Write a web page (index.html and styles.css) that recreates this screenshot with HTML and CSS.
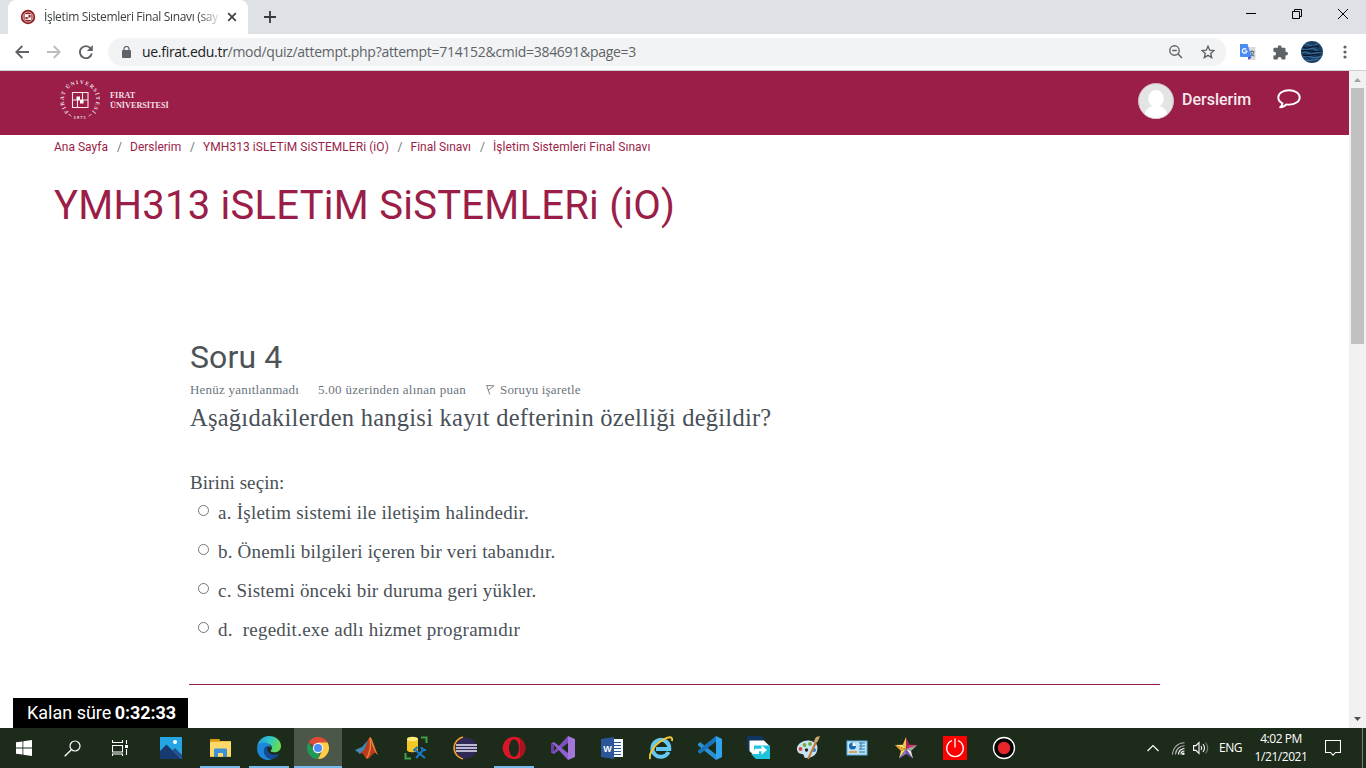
FILE: index.html
```html
<!DOCTYPE html>
<html lang="tr">
<head>
<meta charset="utf-8">
<title>İşletim Sistemleri Final Sınavı</title>
<link rel="stylesheet" href="styles.css">
</head>
<body>
<div class="screen">
  <div class="tabstrip">
    <div class="tab">
      <svg class="favicon" width="16" height="16" viewBox="0 0 16 16"><circle cx="8" cy="8" r="7.2" fill="#8f1d20"/><circle cx="8" cy="8" r="5" fill="none" stroke="#e7c9c9" stroke-width=".9"/><path d="M5 6h3v2H5zM8.500 8.500h2.500v2H8.500z" fill="#fff"/><path d="M5 5.500h6v5H5zM8 5.500v5" fill="none" stroke="#fff" stroke-width=".8"/></svg>
      <span class="tab-title">İşletim Sistemleri Final Sınavı (say</span>
      <svg class="tab-close" width="10" height="10" viewBox="0 0 10 10"><path d="M1.200 1.200l7.600 7.600M8.800 1.200L1.200 8.800" stroke="#3c4043" stroke-width="1.700"/></svg>
    </div>
    <svg class="newtab" width="12" height="12" viewBox="0 0 12 12"><path d="M6 0v12M0 6h12" stroke="#35383c" stroke-width="1.800"/></svg>
    <div class="winbtns">
      <svg width="10" height="10" viewBox="0 0 10 10"><path d="M0 4.500h10" stroke="#000"/></svg>
      <svg width="10" height="10" viewBox="0 0 10 10"><path d="M.5 2.500h7v7h-7zM2.500 2.500v-2h7v7h-2" fill="none" stroke="#000"/></svg>
      <svg width="10" height="10" viewBox="0 0 10 10"><path d="M0 0l10 10M10 0L0 10" stroke="#000"/></svg>
    </div>
  </div>

  <div class="toolbar">
    <div class="nav">
      <svg width="14" height="14" viewBox="0 0 14 14"><path d="M14 7H1.500M7.300 1L1.300 7l6 6" fill="none" stroke="#5f6368" stroke-width="1.800"/></svg>
      <svg width="14" height="14" viewBox="0 0 14 14"><path d="M0 7h12.500M6.700 1l6 6-6 6" fill="none" stroke="#babcbe" stroke-width="1.800"/></svg>
      <svg width="14" height="14" viewBox="0 0 14 14"><path d="M11.600 3.300A6 6 0 1 0 12.800 8.500" fill="none" stroke="#5f6368" stroke-width="1.900"/><path d="M13.800 0v6H7.800z" fill="#5f6368"/></svg>
    </div>
    <div class="omnibox">
      <svg class="lock" width="9" height="12" viewBox="0 0 9 12"><rect y="4" width="9" height="8" rx="1" fill="#5f6368"/><path d="M2 4.500V3a2.500 2.500 0 0 1 5 0v1.500" fill="none" stroke="#5f6368" stroke-width="1.200"/></svg>
      <span class="url"><b>ue.firat.edu.tr</b>/mod/quiz/attempt.php?attempt=714152&amp;cmid=384691&amp;page=3</span>
      <svg class="lens" width="14" height="14" viewBox="0 0 14 14"><circle cx="5.500" cy="5.500" r="4.700" fill="none" stroke="#5f6368" stroke-width="1.400"/><path d="M3.200 5.500h4.600M8.800 8.800l4.200 4.200" stroke="#5f6368" stroke-width="1.500"/></svg>
      <svg class="star" width="14" height="14" viewBox="0 0 14 14"><path d="M7 1.300l1.700 3.900 4.200.4-3.200 2.800 1 4.200L7 10.400l-3.700 2.200 1-4.200L1.100 5.600l4.200-.4z" fill="none" stroke="#5f6368" stroke-width="1.400"/></svg>
    </div>
    <svg class="translate" width="16" height="16" viewBox="0 0 16 16"><path d="M7 3h8.500v13H9z" fill="#dcdcdc"/><path d="M9.500 7.500h5M12 6v1.500M10.500 7.500c.5 2.500 2 4 4 4.800M14 7.500c-.5 2.500-2 4-4 4.800" fill="none" stroke="#617d8b" stroke-width="1.100"/><path d="M0 0h7.500L11.500 13H1a1 1 0 0 1-1-1z" fill="#4a8af4"/><path d="M8 13h3.500L8.600 16z" fill="#3f3fc0"/><path d="M6.200 5.200A2.300 2.300 0 1 0 6.900 7H4.800" fill="none" stroke="#fff" stroke-width="1.200"/></svg>
    <svg class="puzzle" width="15" height="15" viewBox="0 0 15 15"><path d="M1.300 2.800h3.500v-.6a1.900 1.900 0 0 1 3.800 0v.6h3q.9 0 .9.900v3h.6a1.900 1.900 0 0 1 0 3.800h-.6v3.100q0 .9-.9.900H8.500v-.7a1.900 1.900 0 0 0-3.800 0v.7H1.300q-.9 0-.9-.9v-3h.7a1.900 1.900 0 0 0 0-3.900H.4V3.700q0-.9.900-.9z" fill="#5f6368"/></svg>
    <svg class="profile" width="22" height="22" viewBox="0 0 22 22"><defs><clipPath id="pc"><circle cx="11" cy="11" r="11"/></clipPath></defs><g clip-path="url(#pc)"><path fill="#1a3f63" d="M0 0h22v22H0z"/><path d="M0 4q4-2 8 0t8-1 6 1M-1 8q5 2 9 0t7 1 8-1M0 12q4-2 7 0t8 0 7 0M2 16q4-2 8 0t11-1M4 19q4 1 8 0t7 0" fill="none" stroke="#3a7199" stroke-width="1.100"/><path d="M2 6q4 2 8 0t8 0M0 10q5-1 9 0t12 0M2 14q4 1 8 0t9 0" fill="none" stroke="#071428" stroke-width="1.200"/></g></svg>
    <svg class="kebab" width="4" height="14" viewBox="0 0 4 14"><g fill="#5f6368"><circle cx="2" cy="2" r="1.600"/><circle cx="2" cy="7" r="1.600"/><circle cx="2" cy="12" r="1.600"/></g></svg>
  </div>

  <div class="viewport">
    <main class="page">
      <header class="site-header">
        <div class="brand">
          <svg width="40" height="40" viewBox="0 0 40 40"><defs><path id="arcTop" d="M9.580 32.420A16.200 16.200 0 1 1 30.420 32.420"/></defs><text class="seal"><textPath href="#arcTop" startOffset="1" textLength="76">FIRAT ÜNİVERSİTESİ</textPath></text><text class="seal year" x="20" y="38.600" text-anchor="middle">1975</text><path d="M8.500 34.500q2 .3 3 1.800M31.500 34.500q-2 .3-3 1.800" stroke="#fff" stroke-width=".7" fill="none"/><path d="M12.500 12.500h15.500v15H12.500zM22.500 12.500v7.500M17.500 20v7.500M12.500 20h15.500" fill="none" stroke="#f8e8ee" stroke-width="1.100"/><path d="M16.500 16.500H20V20h-3.500zM20 20h3.500v3.500H20z" fill="#fff"/></svg>
          <div class="brand-name"><span class="n1">FIRAT</span><span class="n2">ÜNİVERSİTESİ</span></div>
        </div>
        <div class="user">
          <svg width="36" height="36" viewBox="0 0 36 36"><defs><clipPath id="av"><circle cx="18" cy="18" r="17.800"/></clipPath></defs><g clip-path="url(#av)"><path fill="#e4e4e4" d="M0 0h36v36H0z"/><ellipse cx="18" cy="15.500" rx="7.800" ry="8.500" fill="#fff"/><path d="M6 36c0-9 5-13.500 12-13.500S30 27 30 36z" fill="#fff"/></g><circle cx="18" cy="18" r="17.500" fill="none" stroke="#cbb5bd" stroke-width=".7"/></svg>
          <span class="user-link">Derslerim</span>
          <svg class="chat" width="24" height="20" viewBox="0 0 24 20"><path d="M12 1.200C6 1.200 1.300 4.400 1.300 8.400c0 2.500 1.600 4.600 4.200 5.900-.2 1.700-1 3-2.400 4 2.700-.1 4.800-1 6.300-2.900.9.200 1.700.2 2.600.2 6 0 10.700-3.200 10.700-7.200S18 1.200 12 1.200z" fill="none" stroke="#fff" stroke-width="1.900" stroke-linejoin="round"/></svg>
        </div>
      </header>
      <nav class="crumbs"><a class="c1">Ana Sayfa</a><i>/</i><a class="c2">Derslerim</a><i>/</i><a class="c3">YMH313 iSLETiM SiSTEMLERi (iO)</a><i>/</i><a class="c4">Final Sınavı</a><i>/</i><a class="c5">İşletim Sistemleri Final Sınavı</a></nav>
      <h1>YMH313 iSLETiM SiSTEMLERi (iO)</h1>
      <section class="question">
        <h2>Soru 4</h2>
        <div class="meta"><span class="m1">Henüz yanıtlanmadı</span><span class="m2">5.00 üzerinden alınan puan</span><svg width="9" height="11" viewBox="0 0 9 11"><path d="M.5 1l3.300 9.500M1 1.500l7 .3-2.500 2-3.500 2.500" fill="none" stroke="#777" stroke-width=".9"/></svg><span class="m3">Soruyu işaretle</span></div>
        <p class="qtext">Aşağıdakilerden hangisi kayıt defterinin özelliği değildir?</p>
        <p class="prompt">Birini seçin:</p>
        <div class="answers">
          <label><span class="radio"></span><span class="a1">a. İşletim sistemi ile iletişim halindedir.</span></label>
          <label><span class="radio"></span><span class="a2">b. Önemli bilgileri içeren bir veri tabanıdır.</span></label>
          <label><span class="radio"></span><span class="a3">c. Sistemi önceki bir duruma geri yükler.</span></label>
          <label><span class="radio"></span><span class="a4">d.&nbsp; regedit.exe adlı hizmet programıdır</span></label>
        </div>
      </section>
      <div class="timer">Kalan süre <b>0:32:33</b></div>
    </main>
    <div class="scrollbar">
      <svg width="17" height="17" viewBox="0 0 17 17"><path d="M5 11h7L8.500 7z" fill="#a3a3a3"/></svg>
      <div class="thumb"></div>
      <svg class="down" width="17" height="17" viewBox="0 0 17 17"><path d="M5 6h7l-3.500 4z" fill="#505050"/></svg>
    </div>
  </div>

  <div class="taskbar">
    <div class="sys">
      <div><svg width="16" height="16" viewBox="0 0 16 16"><path d="M0 2.300L6.500 1.400v6.200H0zM7.300 1.300L16 0v7.600H7.300zM0 8.400h6.500v6.200L0 13.700zM7.300 8.400H16V16l-8.700-1.300z" fill="#fff"/></svg></div>
      <div><svg width="17" height="17" viewBox="0 0 17 17"><circle cx="11" cy="6" r="5" fill="none" stroke="#fff" stroke-width="1.200"/><path d="M7.300 9.700L.7 16.300" stroke="#fff" stroke-width="1.300"/></svg></div>
      <div><svg width="16" height="16" viewBox="0 0 16 16"><path d="M.5 0v2.500h10V0M.5 5.500h10v6.500H.5zM.5 16v-2h10v2M14.500 0v4M14.500 9v6" fill="none" stroke="#fff" stroke-width="1.100"/><path d="M13 5h3v3h-3z" fill="#fff"/></svg></div>
    </div>
    <div class="apps">
      <div class="app"><svg width="24" height="24" viewBox="0 0 24 24"><path fill="#25a5e3" d="M1 1h22v22H1z"/><path d="M1 15l6.500-6.500L22 23H1z" fill="#173b70"/><path d="M13.500 14.500L16 12l7 7v4h-1z" fill="#25528c"/><circle cx="16" cy="6" r="2.100" fill="#fff"/></svg></div>
      <div class="app running"><svg width="24" height="24" viewBox="0 0 24 24"><path d="M2 3h9l1 2h11v16H2z" fill="#f2bd42"/><path d="M2 3h9l1.500 2.500H2z" fill="#d99a16"/><path d="M2 6h21v14H2z" fill="#fed869"/><path d="M6 21v-7.500q0-1 1-1h11q1 0 1 1V21h-4v-4h-5v4z" fill="#3c91d4"/></svg></div>
      <div class="app running"><svg width="24" height="24" viewBox="0 0 24 24"><defs><linearGradient id="eg" x1="0" x2="1" y1="0" y2=".3"><stop stop-color="#2697df"/><stop offset=".55" stop-color="#2dc7c8"/><stop offset="1" stop-color="#68dc52"/></linearGradient></defs><path d="M.2 11C1 4 6 0 12 0c7 0 12 4.500 12 10 0 4-3 6.300-6.500 6.300-3 0-4.500-1-3.300-2.300 2-2.500 0-6-4-6-5 0-9.500 1-10 3z" fill="url(#eg)"/><path d="M.2 11C1.500 7 5 6 8 6.500c4 .4 6 3 5.500 5.500C12 9 7 11 7 15c0 5 5 8 8 8.500C7 26-1 20 .2 11z" fill="#1f87d8"/><path d="M11.500 9.700C7 10 6 14 7.500 18s6 6 8.500 5c3-1 5-3 6.500-5.300-6 2.300-11.500.3-12-3.700-.2-2 0-3.500 1-4.300z" fill="#124b99"/></svg></div>
      <div class="app running active"><svg width="24" height="24" viewBox="0 0 24 24"><path d="M2.470 6.500A11 11 0 0 1 21.530 6.500L12 12z" fill="#df4a38"/><path d="M2.470 6.500A11 11 0 0 0 12 23L14.500 13 8 14z" fill="#219957"/><path d="M21.530 6.500A11 11 0 0 1 12 23l4.500-9L12 6.500z" fill="#fdce46"/><circle cx="12" cy="12" r="5.200" fill="#f4f4f4"/><circle cx="12" cy="12" r="4" fill="#4b8df5"/></svg></div>
      <div class="app"><svg width="24" height="24" viewBox="0 0 24 24"><path d="M0 14l7-3 7-8-5 12-4 3z" fill="#4289b9"/><path d="M5 17l4-3C12 9 13 2 15 1c2-.5 5 13 8 18-3-3-4-2-6 0s-3 4-5 4-3-7-7-6z" fill="#bb3b1d"/><path d="M15 1c2 0 5 13 8 18-4-3-6-10-8-18z" fill="#e97d2b"/><path d="M15 2c1 7 0 15-3 20" stroke="#f18b3b" stroke-width="1.300" fill="none"/></svg></div>
      <div class="app"><svg width="24" height="24" viewBox="0 0 24 24"><path d="M17 1.500h5.500V7M1.500 17v5.500H7" fill="none" stroke="#42a048" stroke-width="2"/><path d="M3 3v11c0 3 11 3 11 0V3z" fill="#f3c724"/><ellipse cx="8.500" cy="3" rx="5.500" ry="2.300" fill="#ffea7c"/><path d="M10 13l11 9M20 13l-8 9" stroke="#1b78c2" stroke-width="2.200"/><path d="M9.500 15l4-4M17.500 11q0 3.500 4.500 3" fill="none" stroke="#1b78c2" stroke-width="2.200"/></svg></div>
      <div class="app"><svg width="24" height="24" viewBox="0 0 24 24"><path d="M10 1.200A11 11 0 0 0 10 22.800" fill="none" stroke="#f29b37" stroke-width="1.700"/><circle cx="13.300" cy="12" r="10.500" fill="#302958"/><path d="M3 9h21M2.800 12H24M3 15h21" stroke="#eceaf7" stroke-width="1.500"/></svg></div>
      <div class="app running"><svg width="24" height="24" viewBox="0 0 24 24"><circle cx="12" cy="12" r="11.300" fill="#d91728"/><path d="M18 2.500a11 11 0 0 1 0 19z" fill="#aa1422"/><ellipse cx="12" cy="12" rx="5" ry="8.800" fill="#1d2b1b"/></svg></div>
      <div class="app"><svg width="24" height="24" viewBox="0 0 24 24"><path d="M17 0l7 3v18l-7 3z" fill="#a276dc"/><path d="M17 0v7L3 18l-3-1.500v-1.300L3 15z" fill="#7f50bb"/><path d="M0 7.500L3 6l14 11v7L3 9z" fill="#8f60ce"/><path d="M0 7.500L3 9v6l-3 1.500z" fill="#6c3da8"/></svg></div>
      <div class="app"><svg width="24" height="24" viewBox="0 0 24 24"><path d="M12 3h11v18H12z" fill="#f6f9ff"/><path d="M13 6.500h8M13 9.500h8M13 12.500h8M13 15.500h8M13 18.500h8" stroke="#2b579a" stroke-width="1.200"/><path d="M1 3l13-2v22L1 21z" fill="#2b579a"/><text class="word" x="7.500" y="15.500" text-anchor="middle">W</text></svg></div>
      <div class="app"><svg width="24" height="24" viewBox="0 0 24 24"><path d="M19.500 16A8.500 8.500 0 1 1 20.300 13H7" fill="none" stroke="#62c9f2" stroke-width="4"/><path d="M1.500 23C-1 20 4 10 12 5s12-5 11 0" fill="none" stroke="#f4c533" stroke-width="1.900"/></svg></div>
      <div class="app"><svg width="24" height="24" viewBox="0 0 24 24"><path d="M0 8l2-2 16 12.500V24L0 9.500z" fill="#2a91d4"/><path d="M0 16l2 2L18 5.500V0L0 14.500z" fill="#1875b9"/><path d="M18 0l6 3v18l-6 3z" fill="#30a5ed"/></svg></div>
      <div class="app"><svg width="24" height="24" viewBox="0 0 24 24"><path d="M0 0h14l3 3v13H3L0 13z" fill="#10345f"/><path d="M2.500 4.500H17l6 6V18H5.500l-3-3z" fill="#fff"/><path d="M7 9.500h16V23H9l-5-5h8v-3.500H7z" fill="#1fc3dc"/><path d="M7.500 12.800h7V9.300l5.500 4.700-5.500 4.700v-3.500h-7z" fill="#fff"/></svg></div>
      <div class="app"><svg width="24" height="24" viewBox="0 0 24 24"><path d="M1 14C0 8 8 3 15 5s7 6 6 10-5 7-11 7c-3 0-1-4-4-4-2 0-4-1-5-4z" fill="#c8e3f2"/><g><circle cx="4.500" cy="13" r="1.900" fill="#d84735"/><circle cx="8.500" cy="9" r="1.900" fill="#70ad3d"/><circle cx="14" cy="8" r="1.900" fill="#70ad3d"/><circle cx="18" cy="14" r="2" fill="#397bc3"/></g><circle cx="10.500" cy="14" r="1.700" fill="#1d2b1b"/><path d="M21 4l-9 19" stroke="#c37a38" stroke-width="2"/><path d="M18 5l2-4 4-1-2 5-3 2z" fill="#c9a36c"/></svg></div>
      <div class="app"><svg width="24" height="24" viewBox="0 0 24 24"><path fill="#57b2e5" d="M1.500 4.500h21v15h-21z"/><path fill="#bce3f7" d="M2.500 5.500h19v13h-19z"/><circle cx="7.500" cy="10" r="3.500" fill="#176cb2"/><path d="M7.500 10V6.500A3.500 3.500 0 0 1 11 10z" fill="#f3f8fb"/><path d="M14 7h6M14 10h6M14 13h6M16 6v8" stroke="#337fae"/><path d="M4 16h8" stroke="#e28c2c" stroke-width="1.500"/><path d="M14 16h6" stroke="#27729c"/></svg></div>
      <div class="app"><svg width="24" height="24" viewBox="0 0 24 24"><path d="M12 1v12L8.800 8.800z" fill="#f6c948"/><path d="M12 1l3.200 7.800L12 13z" fill="#b3265b"/><path d="M.8 9l8-.2L12 13z" fill="#ffe274"/><path d="M.8 9L12 13l-5 2z" fill="#e8a729"/><path d="M23.200 9l-8-.2L12 13z" fill="#d83175"/><path d="M23.200 9L17 15l-5-2z" fill="#a6a6a6"/><path d="M5 22.500L7 15l5-2z" fill="#ffd65b"/><path d="M5 22.500L12 13v5z" fill="#9276cc"/><path d="M19 22.500L12 18v-5z" fill="#6d50a5"/><path d="M19 22.500L17 15l-5-2z" fill="#e4e4e4"/></svg></div>
      <div class="app"><svg width="24" height="24" viewBox="0 0 24 24"><path fill="#f00" d="M0 0h24v24H0z"/><path d="M9 4.500a8.300 8.300 0 1 0 6 0M12 2.500v9" fill="none" stroke="#fff" stroke-width="1.300"/></svg></div>
      <div class="app"><svg width="24" height="24" viewBox="0 0 24 24"><circle cx="12" cy="12" r="10.500" fill="#050505" stroke="#fff" stroke-width="1.300"/><circle cx="12" cy="12" r="6.200" fill="#e8252b"/></svg></div>
    </div>
    <div class="tray">
      <svg class="up" width="12" height="8" viewBox="0 0 12 8"><path d="M.5 7L6 1.500 11.500 7" fill="none" stroke="#fff" stroke-width="1.200"/></svg>
      <svg class="wifi" width="13" height="13" viewBox="0 0 13 13"><g fill="none" stroke="#b9beb8" stroke-width="1.100"><path d="M.5 12.500A12 12 0 0 1 12.500.7M3.500 12.500A9 9 0 0 1 12.500 3.700"/><path d="M6.500 12.500a6 6 0 0 1 6-6M9 12.500a3.500 3.500 0 0 1 3.500-3.500" stroke="#fff"/></g><circle cx="11.300" cy="11.700" r="1.300" fill="#fff"/></svg>
      <svg class="sound" width="17" height="14" viewBox="0 0 17 14"><g fill="none" stroke="#fff" stroke-width="1.100"><path d="M.6 4.600h2.300L6 1.500v11L2.900 9.400H.6zM8 5q1.500 2 0 4M10 3q3 4 0 8"/><path d="M12.500 1.500q4.500 5.500 0 11" stroke="#788078"/></g></svg>
      <span class="lang">ENG</span>
      <div class="clock"><span>4:02 PM</span><span class="date">1/21/2021</span></div>
      <svg class="action" width="16" height="16" viewBox="0 0 16 16"><path d="M.5.500h15v12h-5L8 15.200 5.500 12.500h-5z" fill="none" stroke="#fff" stroke-width="1.100"/></svg>
      <div class="peek"></div>
    </div>
  </div>
</div>
</body>
</html>
```
FILE: styles.css
```css
* { box-sizing: border-box; }
body { margin: 0; overflow: hidden; }
h1, h2, p { margin: 0; font-weight: 400; }
svg { display: block; flex: none; }
.screen { width: 1366px; height: 768px; display: flex; flex-direction: column; background: #fff; white-space: nowrap; font-family: Roboto, sans-serif; }

.tabstrip { height: 34px; background: #dee1e6; display: flex; align-items: center; padding-left: 8px; }
.tab { width: 240px; height: 34px; background: #fff; border-radius: 8px 8px 0 0; display: flex; align-items: center; padding-left: 12px; }
.tab-title { width: 176px; margin-left: 8px; font: 12px/18px "Open Sans", sans-serif; letter-spacing: -.33px; color: #3c4043; -webkit-mask-image: linear-gradient(to right, #000 155px, transparent 178px); }
.tab-close { margin-left: 7px; }
.newtab { margin-left: 16px; }
.winbtns { display: flex; gap: 36px; margin-left: auto; padding: 0 18px 6px 0; }

.toolbar { height: 37px; display: flex; align-items: center; border-bottom: 1px solid #cfd0d2; background: #fff; }
.nav { display: flex; gap: 18px; padding-left: 15px; }
.omnibox { width: 1118px; height: 28px; margin-left: 15px; border-radius: 14px; background: #f1f3f4; display: flex; align-items: center; padding-left: 14px; }
.url { margin-left: 11px; font: 14px/20px "Open Sans", sans-serif; letter-spacing: -.29px; color: #5f6368; }
.url b { font-weight: 400; color: #202124; }
.lens { margin-left: auto; }
.star { margin: 0 11px 0 18px; }
.translate { margin-left: 14px; }
.puzzle { margin-left: 17px; }
.profile { margin-left: 13px; }
.kebab { margin-left: 20px; }

.viewport { height: 657px; display: flex; }
.page { width: 1349px; position: relative; }
.site-header { height: 64px; background: #9a1e47; display: flex; align-items: center; justify-content: space-between; padding: 0 48px 4px 60px; }
.brand { display: flex; align-items: center; gap: 10px; padding-bottom: 2px; }
.seal { font: bold 5.500px "Liberation Serif", serif; fill: #f3dfe6; }
.year { font-size: 5px; letter-spacing: .8px; }
.brand-name { display: flex; flex-direction: column; padding-top: 1px; font: bold 8.200px/10px "Liberation Serif", serif; color: #f3dfe6; }
.n1 { letter-spacing: .1px; }
.user { display: flex; align-items: center; }
.user-link { margin-left: 8px; font-size: 16px; font-weight: 500; color: #f7eaf0; width: 95px; padding-bottom: 3px; }
.chat { margin-bottom: 4px; }

.crumbs { display: flex; height: 24px; line-height: 24px; padding-left: 54px; font-size: 12px; color: #9a1e47; }
.crumbs i { width: 21px; text-align: center; font-style: normal; color: #6f7579; }
.c1 { width: 55px; }
.c2 { width: 52px; }
.c3 { width: 186.500px; letter-spacing: .06px; }
.c4 { width: 61.500px; }
.c5 { letter-spacing: .05px; }
h1 { padding: 23px 0 0 54px; font-size: 40px; line-height: 48px; font-weight: 400; letter-spacing: .25px; color: #9a1e47; }

.question { width: 971px; height: 355px; margin: 100px 0 0 189px; padding-left: 1px; border-bottom: 1px solid #9a1e47; font-family: "Liberation Serif", serif; color: #495057; }
h2 { font: 400 32px/38px Roboto, sans-serif; padding-top: 8px; color: #4f5356; letter-spacing: .1px; }
.meta { display: flex; align-items: center; height: 27px; font-size: 13px; letter-spacing: .22px; color: #6c757d; }
.m1 { width: 128px; }
.m2 { width: 168px; letter-spacing: .28px; }
.m3 { margin-left: 5px; letter-spacing: .15px; }
.qtext { font-size: 24.500px; line-height: 32px; letter-spacing: .25px; margin-top: -1px; }
.prompt { margin-top: 34px; font-size: 19px; line-height: 30px; letter-spacing: .08px; }
.answers { display: flex; flex-direction: column; }
.answers label { height: 39px; line-height: 30px; font-size: 19px; letter-spacing: .2px; display: flex; }
.a1 { letter-spacing: .25px; }
.a4 { letter-spacing: .24px; }
.radio { width: 11px; height: 11px; margin: 7px 9px 0 8px; border: 1px solid #767676; border-radius: 50%; }

.timer { position: absolute; left: 13px; bottom: 0; width: 175px; height: 30px; background: #000; color: #fff; font-size: 18px; line-height: 30px; padding-left: 14px; }
.timer b { letter-spacing: -.1px; margin-left: -1px; }

.scrollbar { width: 17px; background: #f1f1f1; display: flex; flex-direction: column; }
.thumb { width: 13px; height: 256px; margin-left: 2px; background: #c1c1c1; }
.down { margin-top: auto; }

.taskbar { height: 40px; background: #1d2b1b; display: flex; }
.sys, .apps { display: flex; }
.sys div { width: 48px; display: flex; align-items: center; justify-content: center; }
.apps { gap: 1px; padding-left: 3px; }
.app { width: 48px; height: 40px; display: flex; align-items: center; justify-content: center; background: linear-gradient(#76b9ed, #76b9ed) center bottom / 0 2px no-repeat; }
.running { background-size: 40px 2px; }
.active { background-size: 48px 2px; background-color: #4b5849; }
.word { font: bold 9px "Liberation Sans", sans-serif; fill: #fff; }
.tray { margin-left: auto; display: flex; align-items: center; color: #fff; font: 12px/18px "Open Sans", sans-serif; letter-spacing: -.45px; }
.wifi { margin-left: 13px; }
.sound { margin-left: 8px; }
.lang { width: 26px; margin-left: 9px; }
.clock { width: 62px; margin-left: 5px; display: flex; flex-direction: column; text-align: center; }
.action { margin-left: 13px; }
.peek { width: 4px; height: 40px; margin-left: 21px; border-left: 1px solid #798276; }
```
